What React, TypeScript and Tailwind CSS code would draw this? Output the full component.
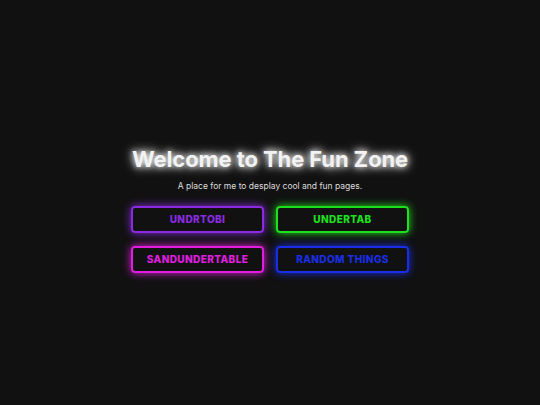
import React from 'react';

const links = [
  { label: 'UNDRTOBI', cls: 'border-[#8a2be2] text-[#8a2be2] shadow-[0_0_8px_#8a2be2]' },
  { label: 'UNDERTAB', cls: 'border-[#1fe01f] text-[#1fe01f] shadow-[0_0_8px_#1fe01f]' },
  { label: 'SANDUNDERTABLE', cls: 'border-[#e01ee0] text-[#e01ee0] shadow-[0_0_8px_#e01ee0]' },
  { label: 'RANDOM THINGS', cls: 'border-[#1a2ee6] text-[#1a2ee6] shadow-[0_0_8px_#1a2ee6]' },
];

const App: React.FC = () => {
  return (
    <div className="min-h-screen bg-[#111111] flex flex-col items-center justify-center pt-[16px] font-['Inter',sans-serif]">
      <h1 className="text-[22px] font-bold text-[#f2f2f2] leading-none tracking-[-0.1px] [text-shadow:0_0_6px_#fff,0_0_12px_#fff]">
        Welcome to The Fun Zone
      </h1>
      <p className="mt-[12px] text-[8.5px] text-[#dddddd] leading-none">
        A place for me to desplay cool and fun pages.
      </p>
      <div className="mt-[16px] grid grid-cols-2 gap-x-[12px] gap-y-[13px]">
        {links.map((l) => (
          <a
            key={l.label}
            href="#"
            className={`w-[133px] h-[27px] flex items-center justify-center border-2 rounded-[4px] text-[10px] font-extrabold tracking-[0.4px] ${l.cls}`}
          >
            {l.label}
          </a>
        ))}
      </div>
    </div>
  );
};

export default App;
